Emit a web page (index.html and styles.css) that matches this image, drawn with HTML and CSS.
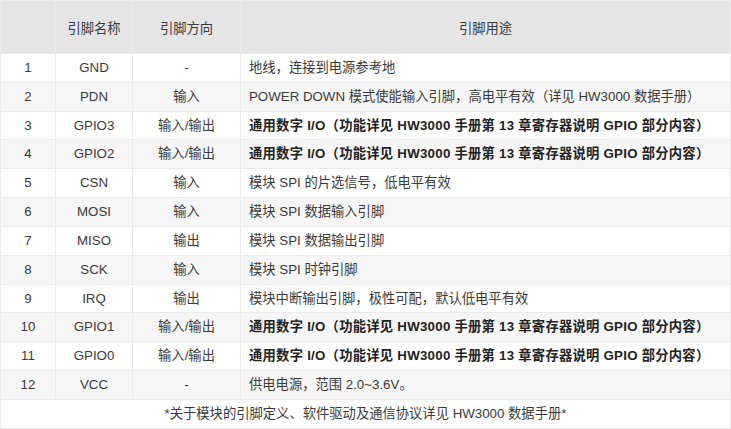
FILE: index.html
```html
<!DOCTYPE html>
<html lang="zh-CN">
<head>
<meta charset="utf-8">
<title>引脚说明</title>
<link rel="stylesheet" href="styles.css">
</head>
<body>
<table class="pins">
  <colgroup>
    <col class="c-no"><col class="c-name"><col class="c-dir"><col class="c-use">
  </colgroup>
  <thead>
    <tr><th></th><th>引脚名称</th><th>引脚方向</th><th>引脚用途</th></tr>
  </thead>
  <tbody>
    <tr><td>1</td><td>GND</td><td>-</td><td class="use">地线，连接到电源参考地</td></tr>
    <tr><td>2</td><td>PDN</td><td>输入</td><td class="use">POWER DOWN 模式使能输入引脚，高电平有效（详见 HW3000 数据手册）</td></tr>
    <tr><td>3</td><td>GPIO3</td><td>输入/输出</td><td class="use strong">通用数字 I/O（功能详见 HW3000 手册第 13 章寄存器说明 GPIO 部分内容）</td></tr>
    <tr><td>4</td><td>GPIO2</td><td>输入/输出</td><td class="use strong">通用数字 I/O（功能详见 HW3000 手册第 13 章寄存器说明 GPIO 部分内容）</td></tr>
    <tr><td>5</td><td>CSN</td><td>输入</td><td class="use">模块 SPI 的片选信号，低电平有效</td></tr>
    <tr><td>6</td><td>MOSI</td><td>输入</td><td class="use">模块 SPI 数据输入引脚</td></tr>
    <tr><td>7</td><td>MISO</td><td>输出</td><td class="use">模块 SPI 数据输出引脚</td></tr>
    <tr><td>8</td><td>SCK</td><td>输入</td><td class="use">模块 SPI 时钟引脚</td></tr>
    <tr><td>9</td><td>IRQ</td><td>输出</td><td class="use">模块中断输出引脚，极性可配，默认低电平有效</td></tr>
    <tr><td>10</td><td>GPIO1</td><td>输入/输出</td><td class="use strong">通用数字 I/O（功能详见 HW3000 手册第 13 章寄存器说明 GPIO 部分内容）</td></tr>
    <tr><td>11</td><td>GPIO0</td><td>输入/输出</td><td class="use strong">通用数字 I/O（功能详见 HW3000 手册第 13 章寄存器说明 GPIO 部分内容）</td></tr>
    <tr><td>12</td><td>VCC</td><td>-</td><td class="use">供电电源，范围 2.0~3.6V。</td></tr>
    <tr><td colspan="4" class="note">*关于模块的引脚定义、软件驱动及通信协议详见 HW3000 数据手册*</td></tr>
  </tbody>
</table>
</body>
</html>
```

FILE: styles.css
```css
html, body {
  margin: 0;
  padding: 0;
  background: #ffffff;
}

.pins {
  width: 730px;
  border-collapse: collapse;
  table-layout: fixed;
  font-family: "Liberation Sans", "Noto Sans CJK SC", sans-serif;
  font-size: 13.3px;
  color: #3a3a3a;
}

.c-no { width: 55px; }
.c-name { width: 77px; }
.c-dir { width: 108px; }
.c-use { width: 490px; }

.pins th,
.pins td {
  border: 1px solid #ebebeb;
  text-align: center;
  vertical-align: middle;
  white-space: nowrap;
}

.pins th {
  height: 52px;
  padding: 0;
  background: #e5e5e5;
  font-weight: normal;
  color: #3a3a3a;
}

.pins td {
  height: 28.83px;
  padding: 0;
  line-height: 18px;
  box-sizing: border-box;
}

.pins tbody tr:nth-child(even) td {
  background: #f6f6f6;
}

.pins td.use {
  text-align: left;
  padding-left: 8px;
}

.pins td.strong {
  font-weight: bold;
  color: #222;
  letter-spacing: 0.25px;
}

.pins td.note {
  text-align: center;
  background: #ffffff;
}
```
